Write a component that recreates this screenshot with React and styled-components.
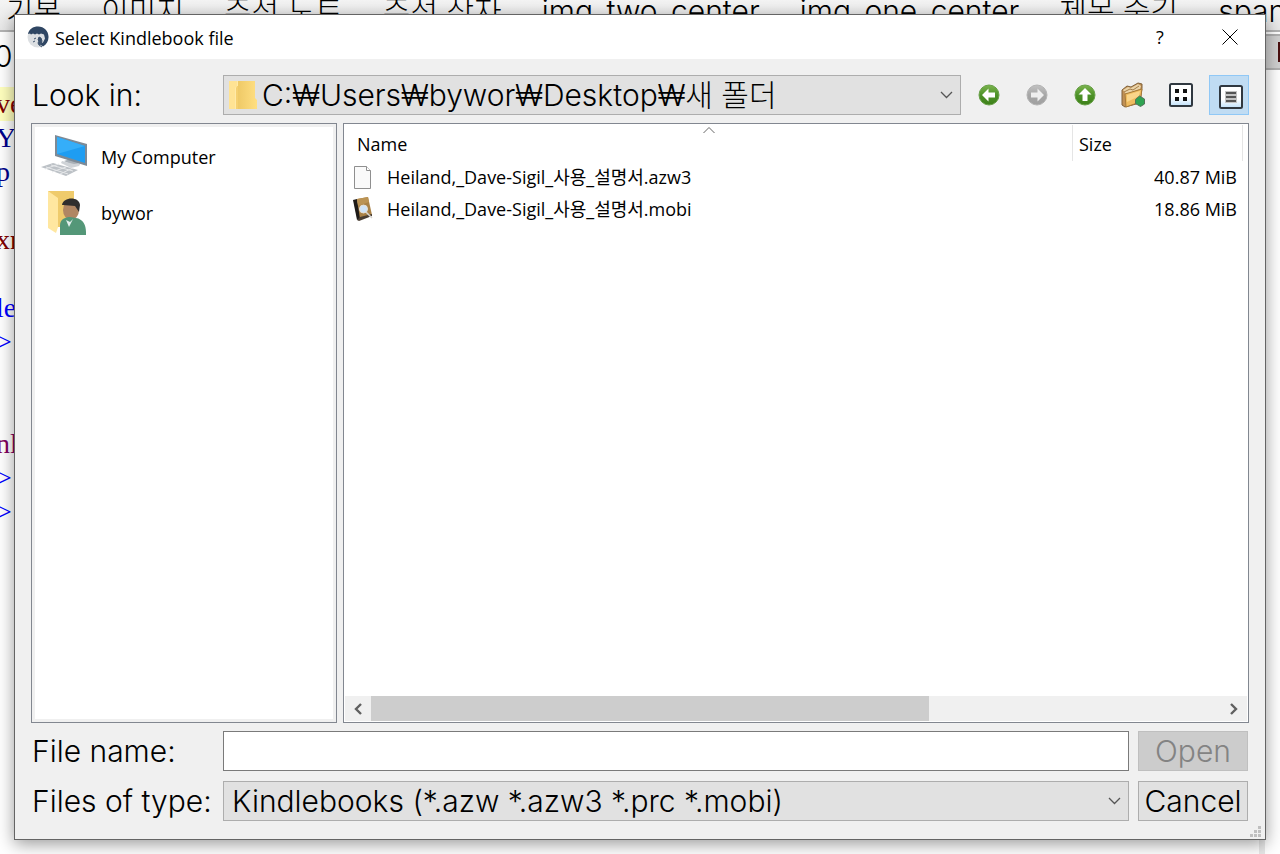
import React from "react";
import styled, { createGlobalStyle } from "styled-components";

const GlobalStyle = createGlobalStyle`
  * { box-sizing: border-box; }
  body { margin: 0; background: #fff; color: #000; }
  button, input, select { font: inherit; color: inherit; margin: 0; border-radius: 0; }
`;

const smallFont = `"Open Sans", "Noto Sans CJK KR", sans-serif`;
const largeFont = `Inter, "Noto Sans CJK KR", sans-serif`;

/* ---------- editor behind the dialog ---------- */

const Editor = styled.div`
  position: relative;
  height: 100vh;
  overflow: hidden;
  display: flex;
  flex-direction: column;
  background: #fff;
`;

const ClipBar = styled.div`
  flex: none;
  display: flex;
  align-items: center;
  gap: 40px;
  height: 32px;
  padding-left: 6px;
  padding-bottom: 8px;
  background: linear-gradient(#f4f4f4, #e8e8e8);
  border-bottom: 2px solid #b4b4b4;
  font: 300 30px/30px ${largeFont};
  white-space: nowrap;
`;

const TabStrip = styled.div`
  flex: none;
  display: flex;
  justify-content: space-between;
  height: 38px;
  padding-top: 2px;
  font: 300 30px/44px ${largeFont};
  text-indent: -6px;
`;

const TabEnd = styled.div`
  display: flex;
  justify-content: flex-end;
  align-items: center;
  width: 20px;
  border: solid #b0b0b0;
  border-width: 2px 0;
  background: #d0d0d0;
`;

const TabMark = styled.div`
  width: 2px;
  height: 20px;
  background: #4a1010;
`;

const CodeArea = styled.div`
  flex: 1;
  margin-right: 15px;
  padding-top: 17px;
  border-right: 6px solid #e8e8e8;
  font: 28px/34px "Liberation Serif", serif;
  text-indent: -4px;
`;

const CodeLine = styled.div`
  height: 34px;
  color: ${(p) => p.$color};
  background: ${(p) => (p.$current ? "#ffffbe" : "transparent")};
`;

/* ---------- dialog ---------- */

const Dialog = styled.section`
  position: absolute;
  inset: 14px;
  display: flex;
  flex-direction: column;
  border: 1px solid #646464;
  background: #f0f0f0;
  box-shadow: 0 4px 16px rgba(0, 0, 0, 0.4);
`;

const TitleBar = styled.header`
  flex: none;
  display: flex;
  align-items: center;
  height: 44px;
  padding-left: 12px;
  background: #fff;
  font: 18px/24px ${smallFont};
`;

const Title = styled.h1`
  flex: 1;
  margin: 2px 0 0 6px;
  font: inherit;
`;

const CaptionButton = styled.button`
  display: grid;
  place-items: center;
  width: 70px;
  height: 44px;
  padding: 0;
  border: 0;
  background: transparent;
`;

const Body = styled.form`
  flex: 1;
  min-height: 0;
  display: flex;
  flex-direction: column;
  gap: 8px;
  padding: 16px 16px 18px;
  font: 300 30px/38px ${largeFont};
`;

const Row = styled.div`
  flex: none;
  display: flex;
  align-items: center;
`;

const FieldLabel = styled.label`
  flex: none;
  width: 192px;
  padding-left: 1px;
  white-space: nowrap;
`;

const Combo = styled.div`
  position: relative;
  flex: 1;
  display: flex;
  align-items: center;
  height: 40px;
  padding-left: 4px;
  border: 1px solid #adadad;
  background: #e1e1e1;

  > svg { flex: none; }
  > svg:last-child {
    position: absolute;
    right: 7px;
    pointer-events: none;
  }
`;

const Select = styled.select`
  appearance: none;
  flex: 1;
  min-width: 0;
  height: 38px;
  padding: 0 28px 0 4px;
  border: 0;
  background: transparent;
`;

const Tools = styled.div`
  flex: none;
  display: flex;
  gap: 8px;
  margin-left: 8px;
`;

const ToolButton = styled.button`
  display: grid;
  place-items: center;
  width: 40px;
  height: 40px;
  padding: ${(p) => (p.$checked ? "3px 0 0 3px" : "0")};
  border: 1px solid ${(p) => (p.$checked ? "#90c8f6" : "transparent")};
  background: ${(p) => (p.$checked ? "#c0dcf3" : "transparent")};
`;

const Panels = styled.div`
  flex: 1;
  min-height: 0;
  display: flex;
  gap: 6px;
  font: 18px/24px ${smallFont};
`;

const Places = styled.ul`
  flex: none;
  width: 306px;
  margin: 0;
  padding: 5px 9px;
  list-style: none;
  border: 1px solid #828790;
  background: #fff;
  box-shadow: inset 0 0 0 3px #f0f0f0;
`;

const Place = styled.li`
  display: flex;
  align-items: center;
  gap: 12px;
  height: 56px;
`;

const FilePane = styled.div`
  flex: 1;
  min-width: 0;
  display: flex;
  flex-direction: column;
  padding: 1px;
  border: 1px solid #828790;
  background: #fff;
`;

const FileTable = styled.table`
  flex: none;
  width: 100%;
  padding-right: 4px;
  table-layout: fixed;
  border-collapse: separate;
  border-spacing: 0;
`;

const HeadCell = styled.th`
  position: relative;
  width: ${(p) => p.$width || "auto"};
  height: 36px;
  padding: 2px 0 0 ${(p) => (p.$first ? "12px" : "6px")};
  border-right: 1px solid #e5e5e5;
  font-weight: 400;
  text-align: left;

  svg {
    position: absolute;
    top: 1px;
    left: calc(50% - 6px);
  }
`;

const NameCell = styled.td`
  height: 32px;
  padding: 0 0 0 8px;
`;

const FileName = styled.span`
  display: flex;
  align-items: center;
  gap: 14px;
  white-space: nowrap;
`;

const SizeCell = styled.td`
  padding: 0 6px 0 0;
  text-align: right;
`;

const ScrollBar = styled.div`
  flex: none;
  display: flex;
  height: 25px;
  margin-top: auto;
  background: #f0f0f0;
`;

const ScrollButton = styled.button`
  display: grid;
  place-items: center;
  width: 26px;
  padding: 0;
  border: 0;
  background: transparent;
`;

const ScrollTrack = styled.div`
  flex: 1;
`;

const ScrollThumb = styled.div`
  width: 65.6%;
  height: 100%;
  background: #cdcdcd;
`;

const Fields = styled.div`
  flex: none;
  display: flex;
  flex-direction: column;
  gap: 10px;
`;

const TextInput = styled.input`
  flex: 1;
  min-width: 0;
  height: 40px;
  padding: 0 6px;
  border: 1px solid #7a7a7a;
  background: #fff;
`;

const PushButton = styled.button`
  flex: none;
  width: 110px;
  height: 40px;
  margin: 0 1px 0 9px;
  padding: 0;
  border: 1px solid #adadad;
  background: #e1e1e1;
  white-space: nowrap;

  &:disabled {
    border-color: #bfbfbf;
    background: #cccccc;
    color: #838383;
  }
`;

const Grip = styled.svg`
  position: absolute;
  right: 3px;
  bottom: 1px;
`;

/* ---------- drawings ---------- */

const AppIcon = () => (
  <svg width="22" height="22" viewBox="0 0 22 22" aria-hidden="true">
    <circle cx="11" cy="11" r="10.5" fill="#dcdfe2" />
    <path d="M1 8C2 3 6 .5 11 .5c6 0 10.500 4.500 10.500 10.500 0 4-2 7.500-5.500 9.500-1-1-3-1.500-3-3l3-1 2-4-1-4-3-1-2 1-2-1-2 1-2-1-2 1-1-1z" fill="#2f4663" />
    <path d="M12 11l2 1 1 3-1 3-2 1-1-2 1-2-1-1zM7 13l2-1M6 16l2-1M12 19l3 2" fill="#3d526d" stroke="#3d526d" />
  </svg>
);

const FolderIcon = () => (
  <svg width="30" height="30" viewBox="0 0 30 30" aria-hidden="true">
    <defs>
      <linearGradient id="folderBack"><stop stopColor="#edc764" /><stop offset="1" stopColor="#ffdf82" /></linearGradient>
    </defs>
    <path d="M8 1h19v17l2 2v9H8z" fill="url(#folderBack)" />
    <path d="M1 1h9v28H1z" fill="#ffeaa8" />
    <path d="M1 1h8v5l-2 2v21H1z" fill="#ffe394" />
    <path d="M9 6h1v23H8V8z" fill="#f5d070" />
  </svg>
);

const ChevronDown = () => (
  <svg width="13" height="8" viewBox="0 0 13 8" aria-hidden="true">
    <path d="M1 1l5.500 5.500L12 1" fill="none" stroke="#555" strokeWidth="1.300" />
  </svg>
);

const RoundArrow = ({ angle = 0, muted = false }) => (
  <svg width="24" height="24" viewBox="0 0 24 24" aria-hidden="true">
    <defs>
      <linearGradient id={muted ? "discMuted" : "disc"} x2="0" y2="1">
        <stop stopColor={muted ? "#c2c2c2" : "#7cb44e"} />
        <stop offset=".5" stopColor={muted ? "#a6a6a6" : "#4d9228"} />
        <stop offset="1" stopColor={muted ? "#a0a0a0" : "#3d8019"} />
      </linearGradient>
    </defs>
    <circle cx="12" cy="12" r="10" fill={`url(#${muted ? "discMuted" : "disc"})`} stroke={muted ? "#b4b4b4" : "#68a048"} />
    <path
      d="M5 12L11.500 5.500v4H18v5h-6.500v4z"
      fill={muted ? "#eee" : "#fff"}
      transform={`rotate(${angle} 12 12)`}
    />
  </svg>
);

const NewFolderIcon = () => (
  <svg width="26" height="26" viewBox="0 0 26 26" aria-hidden="true">
    <path d="M2 8l5-4 4 1 7-4 4 1v4l-2 15-15 4-3-2z" fill="#c09055" stroke="#80613a" />
    <path d="M3 8l5-3 3 1 7-4 3 2-1 3L6 12z" fill="#ead3a8" />
    <path d="M4 10l6-3 3 1 6-4" fill="none" stroke="#a47d48" />
    <path d="M5 12l17-5-2 13-14 5z" fill="#efbc60" stroke="#a77a38" />
    <path d="M7 13l13-4-1 5-12 6z" fill="#fad58a" />
    <path d="M19.500 14l5 3v5l-4 2.500-5-3v-4z" fill="#2fa352" stroke="#53745a" />
  </svg>
);

const ViewFrame = ({ children }) => (
  <svg width="24" height="24" viewBox="0 0 24 24" aria-hidden="true">
    <defs>
      <linearGradient id="viewFace" x2="0" y2="1"><stop offset=".6" stopColor="#fff" /><stop offset="1" stopColor="#bfe0fa" /></linearGradient>
    </defs>
    <rect x="1" y="1" width="22" height="22" rx="1.500" fill="url(#viewFace)" stroke="#303840" strokeWidth="2" />
    {children}
  </svg>
);

const ComputerIcon = () => (
  <svg width="48" height="48" viewBox="0 0 48 48" aria-hidden="true">
    <path d="M23 28l6-2 9 4-5 3z" fill="#aab1b8" />
    <path d="M21 28l12 3 7-1-2 3-8 2-10-5z" fill="#cfd3d7" />
    <path d="M14 2l32 9v22L14 23z" fill="#7d8a96" />
    <path d="M16 4l28 9v17L16 21z" fill="#1e9df2" />
    <path d="M16 4l28 9-28 8z" fill="#35aef9" />
    <path d="M0 34l12-4 25 7-12 6z" fill="#bcc1c6" />
    <path d="M5 34l22 7M10 32l22 6M4 36l14-5M11 39l14-5M19 41l13-6" fill="none" stroke="#e6e8ea" />
  </svg>
);

const UserFolderIcon = () => (
  <svg width="48" height="48" viewBox="0 0 48 48" aria-hidden="true">
    <path d="M7 2h26v36H7z" fill="#efcb6c" />
    <path d="M7 2l10 7v29l-2 6-8-5z" fill="#ffe7a0" />
    <ellipse cx="30" cy="21" rx="8" ry="10" fill="#b08663" />
    <path d="M21 16c1-8 17-9 18 0l-1 7-4-6-12-1z" fill="#302e2d" />
    <path d="M19 46V36c0-6 6-8 10-8l6 1c7 1 10 7 10 14v3z" fill="#549778" />
    <path d="M25 31l4 2 3-3-4 8z" fill="#e3efed" />
  </svg>
);

const PageIcon = () => (
  <svg width="20" height="23" viewBox="-1 0 20 23" aria-hidden="true">
    <path d="M.5.5h12l4 4v18H.5z" fill="#fafafa" stroke="#8f8f8f" />
    <path d="M12.500.5v4h4" fill="#fff" stroke="#8f8f8f" />
  </svg>
);

const BookIcon = () => (
  <svg width="20" height="24" viewBox="0 0 20 24" aria-hidden="true">
    <path d="M0 3l4-1 4 19-4 2z" fill="#1e1a18" />
    <path d="M4 2L15 0l4 18-12 4z" fill="#a98146" />
    <path d="M4 2L15 0l1 5-11 4z" fill="#bb9354" />
    <path d="M4 23l3-3 12-3v2L6 24z" fill="#493d32" />
    <circle cx="10.500" cy="12" r="4" fill="#cfe3f7" stroke="#e6e0d6" />
    <path d="M13 15l6 6" stroke="#d8d5d0" strokeWidth="1.500" />
  </svg>
);

const ScrollArrow = ({ right }) => (
  <svg width="10" height="12" viewBox="0 0 10 12" aria-hidden="true">
    <path d={right ? "M2 1l5 5-5 5" : "M8 1L3 6l5 5"} fill="none" stroke="#606060" strokeWidth="2.400" />
  </svg>
);

/* ---------- data ---------- */

const clips = ["기본", "이미지", "주석 노트", "주석 상자", "img_two_center", "img_one_center", "제목 숨김", "span"];

const codeLines = [
  { text: "ve", color: "#800000", current: true },
  { text: "Y!", color: "#00008b" },
  { text: "p", color: "#00008b" },
  { text: "" },
  { text: "xm", color: "#800000" },
  { text: "" },
  { text: "le", color: "#0000ff" },
  { text: ">", color: "#0000ff" },
  { text: "" },
  { text: "" },
  { text: "nl", color: "#800060" },
  { text: ">", color: "#0000ff" },
  { text: ">", color: "#0000ff" },
];

const files = [
  { name: "Heiland,_Dave-Sigil_사용_설명서.azw3", size: "40.87 MiB", Icon: PageIcon },
  { name: "Heiland,_Dave-Sigil_사용_설명서.mobi", size: "18.86 MiB", Icon: BookIcon },
];

export default function App() {
  return (
    <Editor>
      <GlobalStyle />
      <ClipBar>
        {clips.map((clip) => <span key={clip}>{clip}</span>)}
      </ClipBar>
      <TabStrip>
        <span>00</span>
        <TabEnd><TabMark /></TabEnd>
      </TabStrip>
      <CodeArea>
        {codeLines.map((line, i) => (
          <CodeLine key={i} $color={line.color} $current={line.current}>{line.text}</CodeLine>
        ))}
      </CodeArea>

      <Dialog role="dialog" aria-labelledby="dialog-title">
        <TitleBar>
          <AppIcon />
          <Title id="dialog-title">Select Kindlebook file</Title>
          <CaptionButton type="button">?</CaptionButton>
          <CaptionButton type="button" aria-label="Close">
            <svg width="16" height="16" viewBox="0 0 16 16" aria-hidden="true">
              <path d="M.5.5l15 15M15.500.5l-15 15" stroke="#000" />
            </svg>
          </CaptionButton>
        </TitleBar>

        <Body onSubmit={(e) => e.preventDefault()}>
          <Row>
            <FieldLabel htmlFor="look-in">Look in:</FieldLabel>
            <Combo>
              <FolderIcon />
              <Select id="look-in">
                <option>C:₩Users₩bywor₩Desktop₩새 폴더</option>
              </Select>
              <ChevronDown />
            </Combo>
            <Tools>
              <ToolButton type="button" aria-label="Back"><RoundArrow /></ToolButton>
              <ToolButton type="button" aria-label="Forward"><RoundArrow angle={180} muted /></ToolButton>
              <ToolButton type="button" aria-label="Parent directory"><RoundArrow angle={90} /></ToolButton>
              <ToolButton type="button" aria-label="Create new folder"><NewFolderIcon /></ToolButton>
              <ToolButton type="button" aria-label="List view">
                <ViewFrame><path d="M6 6h4v4H6zM14 6h4v4h-4zM6 14h4v4H6zM14 14h4v4h-4z" fill="#111" /></ViewFrame>
              </ToolButton>
              <ToolButton type="button" aria-label="Detail view" aria-pressed="true" $checked>
                <ViewFrame>
                  <path d="M6 6h12v12H6z" fill="#c4c4c4" />
                  <path d="M7 8h10M7 12h10M7 16h10" stroke="#555" strokeWidth="2" />
                </ViewFrame>
              </ToolButton>
            </Tools>
          </Row>

          <Panels>
            <Places>
              <Place><ComputerIcon />My Computer</Place>
              <Place><UserFolderIcon />bywor</Place>
            </Places>
            <FilePane>
              <FileTable>
                <thead>
                  <tr>
                    <HeadCell $first>
                      Name
                      <svg width="12" height="8" viewBox="0 0 12 8" aria-hidden="true">
                        <path d="M.5 7L6 1.500 11.500 7" fill="none" stroke="#666" />
                      </svg>
                    </HeadCell>
                    <HeadCell $width="170px">Size</HeadCell>
                  </tr>
                </thead>
                <tbody>
                  {files.map(({ name, size, Icon }) => (
                    <tr key={name}>
                      <NameCell><FileName><Icon />{name}</FileName></NameCell>
                      <SizeCell>{size}</SizeCell>
                    </tr>
                  ))}
                </tbody>
              </FileTable>
              <ScrollBar>
                <ScrollButton type="button" aria-label="Scroll left"><ScrollArrow /></ScrollButton>
                <ScrollTrack><ScrollThumb /></ScrollTrack>
                <ScrollButton type="button" aria-label="Scroll right"><ScrollArrow right /></ScrollButton>
              </ScrollBar>
            </FilePane>
          </Panels>

          <Fields>
            <Row>
              <FieldLabel htmlFor="file-name">File name:</FieldLabel>
              <TextInput id="file-name" type="text" />
              <PushButton type="submit" disabled>Open</PushButton>
            </Row>
            <Row>
              <FieldLabel htmlFor="file-type">Files of type:</FieldLabel>
              <Combo>
                <Select id="file-type">
                  <option>Kindlebooks (*.azw *.azw3 *.prc *.mobi)</option>
                </Select>
                <ChevronDown />
              </Combo>
              <PushButton type="button">Cancel</PushButton>
            </Row>
          </Fields>
        </Body>
        <Grip width="12" height="12" viewBox="0 0 12 12" aria-hidden="true">
          <path d="M8 0h3v3H8zM4 4h3v3H4zM8 4h3v3H8zM0 8h3v3H0zM4 8h3v3H4zM8 8h3v3H8z" fill="#bfbfbf" />
        </Grip>
      </Dialog>
    </Editor>
  );
}
